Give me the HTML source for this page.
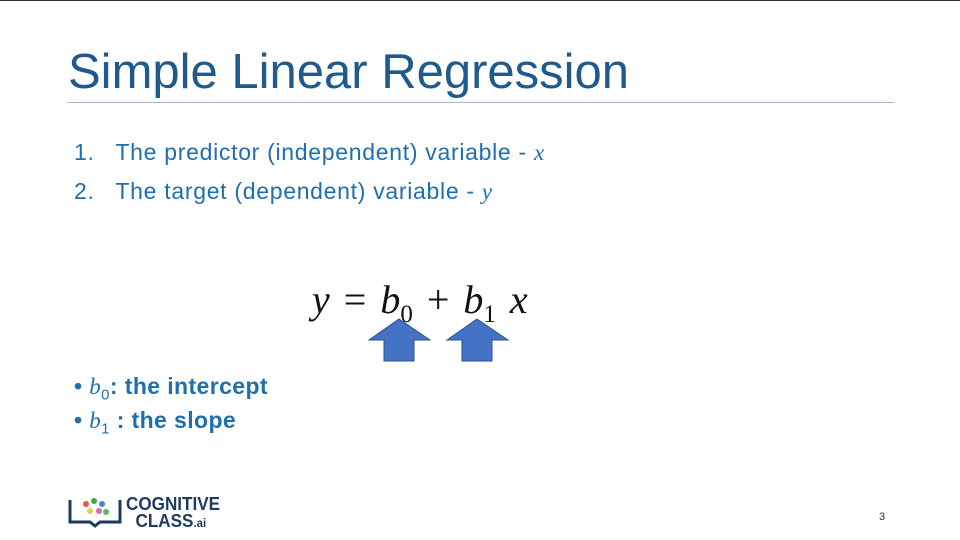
<!DOCTYPE html>
<html><head><style>
body{margin:0;width:960px;height:540px;background:#fff;position:relative;overflow:hidden;font-family:"Liberation Sans",sans-serif}
.t{position:absolute;white-space:nowrap}
.m{font-family:"Liberation Serif",serif;font-style:italic}
</style></head><body>
<div style="position:absolute;left:0;top:0;width:960px;height:1px;background:#333"></div>
<div class="t" style="left:68px;top:44px;font-size:49px;color:#1f5a8c">Simple Linear Regression</div>
<div style="position:absolute;left:67px;top:102px;width:827px;height:1px;background:#a9b7cc"></div>
<div class="t" style="left:74px;top:139px;font-size:23px;color:#1f6fae;letter-spacing:0.7px">1.&nbsp;&nbsp; The predictor (independent) variable - <span class="m">x</span></div>
<div class="t" style="left:74px;top:178px;font-size:23px;color:#1f6fae;letter-spacing:0.7px">2.&nbsp;&nbsp; The target (dependent) variable - <span class="m">y</span></div>
<div class="t m" style="left:312px;top:276px;font-size:40px;color:#111;word-spacing:4px">y <span style="font-style:normal">=</span> b<sub style="font-size:25px;font-style:normal">0</sub> <span style="font-style:normal">+</span> b<sub style="font-size:25px;font-style:normal">1</sub> x</div>
<svg style="position:absolute;left:0;top:0" width="960" height="540">
<polygon points="369,340 399,319 430,340 414,340 414,361 384,361 384,340" fill="#4472c4" stroke="#2f528f"/>
<polygon points="447,340 477,319 508,340 492,340 492,361 462,361 462,340" fill="#4472c4" stroke="#2f528f"/>
</svg>
<div class="t" style="left:74px;top:373px;font-size:23px;color:#1f6fae;font-weight:bold;letter-spacing:0.4px">• <span class="m" style="font-weight:normal">b</span><sub style="font-size:15px;font-weight:normal">0</sub>: the intercept</div>
<div class="t" style="left:74px;top:407px;font-size:23px;color:#1f6fae;font-weight:bold;letter-spacing:0.4px">• <span class="m" style="font-weight:normal">b</span><sub style="font-size:15px;font-weight:normal">1</sub> : the slope</div>
<svg style="position:absolute;left:68px;top:494px" width="56" height="36">
<path d="M2 6v22h20l5 4 5-4h20V6" fill="none" stroke="#1e3a5f" stroke-width="3"/>
<circle cx="18" cy="10" r="3" fill="#e55"/><circle cx="26" cy="7" r="3" fill="#4a4"/><circle cx="34" cy="10" r="3" fill="#48c"/><circle cx="22" cy="17" r="3" fill="#ec4"/><circle cx="31" cy="17" r="3" fill="#d6a"/><circle cx="38" cy="18" r="3" fill="#5b5"/>
</svg>
<div class="t" style="left:126px;top:496px;font-size:18px;font-weight:bold;color:#1e3a5f;line-height:17px;transform:scaleX(0.95);transform-origin:left">COGNITIVE<br>&nbsp;&nbsp;CLASS<span style="font-size:12px">.ai</span></div>
<div class="t" style="left:879px;top:511px;font-size:11px;color:#333">3</div>
</body></html>
